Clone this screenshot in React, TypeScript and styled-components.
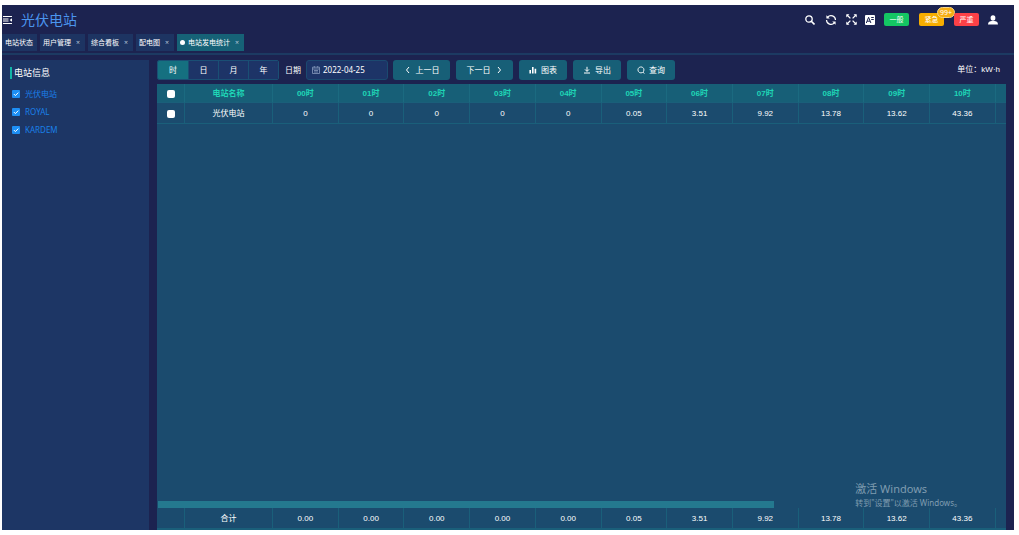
import React from 'react';
import styled, { createGlobalStyle } from 'styled-components';

const GlobalStyle = createGlobalStyle`
  * { box-sizing: border-box; }
  html, body, #root { height: 100%; margin: 0; }
  body {
    background: #fff;
    color: #fff;
    font: 8px/12px "Noto Sans", "Noto Sans CJK SC", sans-serif;
  }
  button, input { font: inherit; color: inherit; margin: 0; }
  button { cursor: pointer; }
`;

const Frame = styled.div`
  height: 100vh;
  padding: 5px 5px 5px 2px;
`;

const Shell = styled.div`
  position: relative;
  height: 100%;
  display: flex;
  flex-direction: column;
  background: #1c2350;
`;

const Header = styled.header`
  height: 29px;
  display: flex;
  align-items: center;
  padding: 0 16px 0 1px;
`;

const IconButton = styled.button<{ $gap?: number }>`
  display: flex;
  padding: 0;
  border: 0;
  background: none;
  margin-right: ${p => p.$gap ?? 0}px;
`;

const Title = styled.h1`
  margin: 0;
  flex: 1;
  font-size: 14px;
  line-height: 20px;
  font-weight: 400;
  color: #4b95ee;
`;

const Alarm = styled.button<{ $color: string; $gap: number }>`
  position: relative;
  width: 25px;
  height: 13px;
  padding: 0;
  border: 0;
  border-radius: 2px;
  background: ${p => p.$color};
  margin-right: ${p => p.$gap}px;
  font-size: 7px;
  line-height: 13px;
`;

const Count = styled.span`
  position: absolute;
  top: -6px;
  right: -11px;
  width: 18px;
  height: 11px;
  border: 1px solid #f4d68a;
  border-radius: 6px;
  background: #f7ae12;
  font-size: 7px;
  line-height: 9px;
`;

const Tabs = styled.nav`
  box-sizing: content-box;
  height: 17px;
  display: flex;
  gap: 3px;
  padding-bottom: 2px;
  border-bottom: 2px solid #1c3a62;
`;

const Tab = styled.button<{ $active?: boolean }>`
  display: flex;
  align-items: center;
  padding: 0 4px 0 3px;
  border: 0;
  background: ${p => (p.$active ? '#166277' : '#1d3462')};
  font-size: 7px;
  line-height: 10px;
  white-space: nowrap;
`;

const Dot = styled.span`
  width: 5px;
  height: 5px;
  margin-right: 3px;
  border-radius: 50%;
  background: #fff;
`;

const Close = styled.span`
  width: 10px;
  padding-left: 4px;
  color: #b5c3d8;
`;

const Body = styled.div`
  flex: 1;
  min-height: 0;
  display: flex;
  gap: 8px;
  padding: 5px 8px 0 0;
`;

const Sidebar = styled.aside`
  width: 147px;
  flex-shrink: 0;
  padding: 7px 8px;
  background: #1d3665;
`;

const SideTitle = styled.h2`
  margin: 0 0 6px;
  padding-left: 2px;
  border-left: 2px solid #12b5a6;
  font-size: 9px;
  line-height: 12px;
  font-weight: 400;
`;

const TreeItem = styled.label`
  display: flex;
  align-items: center;
  gap: 5px;
  height: 18px;
  padding-left: 2px;
  line-height: 12px;
  color: #1a80ea;
`;

const Check = styled.input<{ $plain?: boolean }>`
  appearance: none;
  display: block;
  width: 8px;
  height: 8px;
  border-radius: ${p => (p.$plain ? 2 : 1)}px;
  background: #fff;
  &:checked {
    background: #1d8ff5 url("data:image/svg+xml,%3Csvg xmlns='http://www.w3.org/2000/svg' viewBox='0 0 8 8'%3E%3Cpath d='M1.8 4l1.6 1.6L6.3 2.6' fill='none' stroke='white'/%3E%3C/svg%3E");
  }
`;

const TableCheck = styled(Check)`
  margin: 0 0 0 10px;
`;

const Main = styled.main`
  flex: 1;
  min-width: 0;
  display: flex;
  flex-direction: column;
`;

const Toolbar = styled.div`
  height: 24px;
  display: flex;
  align-items: flex-start;
`;

const Segments = styled.div`
  display: flex;
  height: 20px;
  margin-right: 6px;
  border: 1px solid #1a4f74;
  border-radius: 2px;
  overflow: hidden;
`;

const Segment = styled.button<{ $active?: boolean }>`
  width: 30px;
  padding: 0;
  border: 0;
  border-left: 1px solid #1a4f74;
  background: ${p => (p.$active ? '#157080' : '#1d3467')};
  &:first-child { border-left: 0; }
`;

const DateLabel = styled.label`
  display: flex;
  align-items: center;
  gap: 5px;
  height: 20px;
`;

const DateBox = styled.span`
  display: flex;
  align-items: center;
  gap: 3px;
  width: 82px;
  height: 20px;
  padding: 0 5px;
  border: 1px solid #1b4a70;
  border-radius: 3px;
  background: #1d3467;
`;

const DateInput = styled.input`
  width: 56px;
  padding: 0;
  border: 0;
  outline: 0;
  background: none;
`;

const Actions = styled.div`
  display: flex;
  gap: 6px;
  margin-left: 5px;
`;

const Action = styled.button<{ $wide?: boolean }>`
  display: flex;
  align-items: center;
  justify-content: center;
  gap: 4px;
  width: ${p => (p.$wide ? 57 : 48)}px;
  height: 20px;
  padding: 0;
  border: 0;
  border-radius: 3px;
  background: #175f77;
`;

const Unit = styled.span`
  margin-left: auto;
  padding-right: 6px;
  font-family: "Liberation Sans", "Noto Sans CJK SC", sans-serif;
  line-height: 20px;
`;

const Panel = styled.section`
  flex: 1;
  display: flex;
  flex-direction: column;
  background: #1b4b6e;
`;

const Table = styled.table`
  width: 100%;
  table-layout: fixed;
  border-collapse: separate;
  border-spacing: 0;
  font-family: "Liberation Sans", "Noto Sans CJK SC", sans-serif;
  line-height: 10px;
  text-align: center;
  th, td {
    padding: 2px 0 0;
    border-right: 1px solid #1a5f7a;
    border-bottom: 1px solid #1a5f7a;
  }
  th:last-child, td:last-child { border-right: 0; }
  td { height: 21px; }
  thead th {
    height: 19px;
    background: #175f77;
    border-right-color: #1b6a80;
    color: #1fd6b6;
    font-weight: 700;
  }
  tfoot td { height: 22px; border-bottom-width: 2px; }
`;

const CheckCol = styled.col` width: 28px; `;
const NameCol = styled.col` width: 88px; `;
const HourCol = styled.col` width: 7.74%; `;

const Scroll = styled.div`
  height: 7px;
  margin-top: auto;
  padding-left: 1px;
`;

const Thumb = styled.div`
  width: 72.6%;
  height: 100%;
  background: #24798f;
`;

const Watermark = styled.div`
  position: absolute;
  right: 52px;
  bottom: 21px;
  color: #7f9cb0;
  line-height: 12px;
  pointer-events: none;
`;

const WatermarkTitle = styled.div`
  font-size: 11px;
  line-height: 16px;
`;

const hours = ['00', '01', '02', '03', '04', '05', '06', '07', '08', '09', '10'];
const values = ['0', '0', '0', '0', '0', '0.05', '3.51', '9.92', '13.78', '13.62', '43.36'];
const totals = ['0.00', '0.00', '0.00', '0.00', '0.00', '0.05', '3.51', '9.92', '13.78', '13.62', '43.36'];
const tabs = ['用户管理', '综合看板', '配电图'];

const Columns = () => (
  <colgroup>
    <CheckCol />
    <NameCol />
    {hours.map(h => <HourCol key={h} />)}
    <col />
  </colgroup>
);

const Stroke = ({ d, size = 8, w = 1 }: { d: string; size?: number; w?: number }) => (
  <svg width={size} height={size} viewBox="0 0 8 8" fill="none" stroke="currentColor" strokeWidth={w}>
    <path d={d} />
  </svg>
);

export default function App() {
  return (
    <Frame>
      <GlobalStyle />
      <Shell>
        <Header>
          <IconButton $gap={9} aria-label="菜单">
            <svg width="9" height="8" viewBox="0 0 9 8" fill="none" stroke="#fff">
              <path d="M0 .5h9M0 3h5.5M0 5h5.5M0 7.5h9" />
              <path d="M9 2.2L6.6 4 9 5.8z" fill="#fff" stroke="none" />
            </svg>
          </IconButton>
          <Title>光伏电站</Title>
          <IconButton $gap={10} aria-label="搜索">
            <svg width="10" height="10" viewBox="0 0 10 10" fill="none" stroke="#fff" strokeWidth="1.3">
              <circle cx="4" cy="4" r="3.2" /><path d="M6.3 6.3L9.5 9.5" strokeWidth="1.6" />
            </svg>
          </IconButton>
          <IconButton $gap={9} aria-label="刷新">
            <svg width="12" height="12" viewBox="0 0 12 12" fill="none" stroke="#fff" strokeWidth="1.2">
              <path d="M2.6 3.2A4.5 4.5 0 0 1 10.5 6M9.4 8.8A4.5 4.5 0 0 1 1.5 6" />
              <path d="M1.4 1.2v3.4h3.4zM10.6 10.8V7.4H7.2z" fill="#fff" stroke="none" />
            </svg>
          </IconButton>
          <IconButton $gap={8} aria-label="全屏">
            <svg width="11" height="11" viewBox="0 0 11 11" fill="none" stroke="#fff" strokeWidth="1.3">
              <path d="M1 1l3.4 3.4M10 1L6.6 4.4M1 10l3.4-3.4M10 10L6.6 6.6" />
              <path d="M.3 3.4V.3h3.1zM7.6.3h3.1v3.1zM.3 7.6v3.1h3.1zM10.7 7.6v3.1H7.6z" fill="#fff" stroke="none" />
            </svg>
          </IconButton>
          <IconButton $gap={9} aria-label="语言">
            <svg width="10" height="10" viewBox="0 0 10 10">
              <rect width="10" height="10" rx="1" fill="#fff" />
              <path d="M1.3 8L3.6 2.3 5.9 8M2.1 6.2h3M6.2 2.5h2.6M6.2 4.5h2.6" fill="none" stroke="#1c2350" />
            </svg>
          </IconButton>
          <Alarm $color="#14c663" $gap={10}>一般</Alarm>
          <Alarm $color="#f7ad00" $gap={10}>紧急<Count>99+</Count></Alarm>
          <Alarm $color="#fb4147" $gap={9}>严重</Alarm>
          <IconButton aria-label="用户">
            <svg width="10" height="10" viewBox="0 0 10 10" fill="#fff">
              <ellipse cx="5" cy="3" rx="2.4" ry="2.8" />
              <path d="M0 9.5C0 7 2 6.3 3.6 6.1h2.8C8 6.3 10 7 10 9.5z" />
            </svg>
          </IconButton>
        </Header>

        <Tabs>
          <Tab>电站状态</Tab>
          {tabs.map(t => <Tab key={t}>{t}<Close>×</Close></Tab>)}
          <Tab $active><Dot />电站发电统计<Close>×</Close></Tab>
        </Tabs>

        <Body>
          <Sidebar>
            <SideTitle>电站信息</SideTitle>
            {['光伏电站', 'ROYAL', 'KARDEM'].map(n => (
              <TreeItem key={n}><Check type="checkbox" defaultChecked />{n}</TreeItem>
            ))}
          </Sidebar>

          <Main>
            <Toolbar>
              <Segments>
                {['时', '日', '月', '年'].map((s, i) => <Segment key={s} $active={i === 0}>{s}</Segment>)}
              </Segments>
              <DateLabel>
                日期
                <DateBox>
                  <svg width="8" height="8" viewBox="0 0 8 8" fill="none" stroke="#8799bb" strokeWidth=".8">
                    <path d="M.5 1.2h7v6.3h-7zM.5 3h7M2.3 0v1.6M5.7 0v1.6M2 4.5h4M2 6h4" />
                  </svg>
                  <DateInput defaultValue="2022-04-25" />
                </DateBox>
              </DateLabel>
              <Actions>
                <Action $wide><Stroke d="M5 1L2.5 4 5 7" />上一日</Action>
                <Action $wide>下一日<Stroke d="M3 1l2.5 3L3 7" /></Action>
                <Action><Stroke d="M1.2 7.5V4M3.8 7.5V1M6.4 7.5V2.8" w={1.6} />图表</Action>
                <Action><Stroke d="M4 .8v4.4M2 3.4l2 2 2-2M1 7h6" />导出</Action>
                <Action><Stroke d="M3.9 .9a3 3 0 1 0 .1 0M5.9 6l1.4 1.6" w={0.9} />查询</Action>
              </Actions>
              <Unit>单位：kW·h</Unit>
            </Toolbar>

            <Panel>
              <Table>
                <Columns />
                <thead>
                  <tr>
                    <th><TableCheck $plain type="checkbox" aria-label="全选" /></th>
                    <th>电站名称</th>
                    {hours.map(h => <th key={h}>{h}时</th>)}
                    <th />
                  </tr>
                </thead>
                <tbody>
                  <tr>
                    <td><TableCheck $plain type="checkbox" aria-label="光伏电站" /></td>
                    <td>光伏电站</td>
                    {values.map((v, i) => <td key={i}>{v}</td>)}
                    <td />
                  </tr>
                </tbody>
              </Table>
              <Scroll><Thumb /></Scroll>
              <Table>
                <Columns />
                <tfoot>
                  <tr>
                    <td />
                    <td>合计</td>
                    {totals.map((v, i) => <td key={i}>{v}</td>)}
                    <td />
                  </tr>
                </tfoot>
              </Table>
            </Panel>
          </Main>
        </Body>

        <Watermark>
          <WatermarkTitle>激活 Windows</WatermarkTitle>
          转到"设置"以激活 Windows。
        </Watermark>
      </Shell>
    </Frame>
  );
}
